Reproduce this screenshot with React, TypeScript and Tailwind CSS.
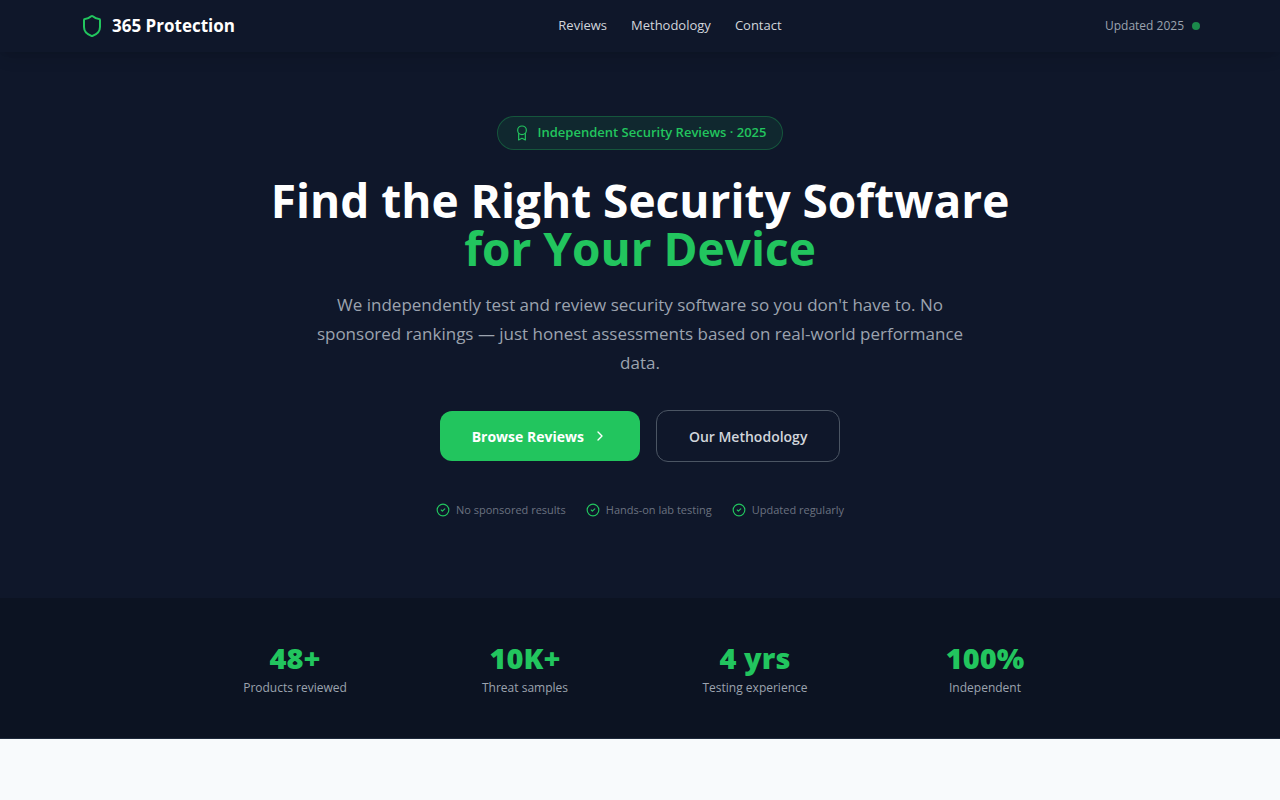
import { Shield, ChevronRight, CircleCheck } from "lucide-react";

const NAV_LINKS = [
  { label: "Reviews", href: "#reviews" },
  { label: "Methodology", href: "#methodology" },
  { label: "Contact", href: "#contact" },
];

const TRUST_POINTS = ["No sponsored results", "Hands-on lab testing", "Updated regularly"];

const STATS = [
  { value: "48+", label: "Products reviewed" },
  { value: "10K+", label: "Threat samples" },
  { value: "4 yrs", label: "Testing experience" },
  { value: "100%", label: "Independent" },
];

function RibbonIcon() {
  return (
    <svg
      viewBox="0 0 24 24"
      className="h-4 w-4"
      fill="none"
      stroke="currentColor"
      strokeWidth={1.75}
      strokeLinecap="round"
      strokeLinejoin="round"
      aria-hidden
    >
      <circle cx="12" cy="8" r="6.5" />
      <path d="M7 13v9.5l5-2.5 5 2.5V13" />
    </svg>
  );
}

function Header() {
  return (
    <header className="relative z-10 bg-[#0f172a] shadow-lg shadow-black/10">
      <div className="mx-auto flex h-[52px] max-w-[1168px] items-center justify-between px-6">
        <a href="#top" className="flex items-center gap-2 text-[17px] font-bold text-white">
          <Shield className="h-6 w-6 text-[#22c55e]" strokeWidth={2} />
          365 Protection
        </a>
        <nav className="flex items-center gap-6">
          {NAV_LINKS.map((link) => (
            <a key={link.label} href={link.href} className="text-[13px] font-medium text-[#d1d5db] hover:text-white">
              {link.label}
            </a>
          ))}
        </nav>
        <div className="flex items-center gap-2 text-[12px] text-[#9ca3af]">
          Updated 2025
          <span className="h-2 w-2 rounded-full bg-[#1b894b]" />
        </div>
      </div>
    </header>
  );
}

function Hero() {
  return (
    <section className="bg-[#0f172a] px-6 pt-16 pb-[78px] text-center">
      <div className="mx-auto flex max-w-4xl flex-col items-center">
        <div className="flex h-[34px] items-center gap-2 rounded-full border border-[#22c55e]/30 bg-[#22c55e]/10 px-4 text-[13px] font-semibold text-[#22c55e]">
          <RibbonIcon />
          Independent Security Reviews · 2025
        </div>
        <h1 className="mt-[26px] text-[46px] leading-[48px] font-bold text-white">
          Find the Right Security Software
          <span className="block text-[#22c55e]">for Your Device</span>
        </h1>
        <p className="mt-[18px] max-w-2xl text-[17px] leading-[29px] text-[#9ca3af]">
          We independently test and review security software so you don't have to. No sponsored rankings — just honest
          assessments based on real-world performance data.
        </p>
        <div className="mt-[33px] flex flex-wrap items-center justify-center gap-4">
          <a
            href="#reviews"
            className="flex h-[50px] items-center gap-2 rounded-xl bg-[#22c55e] px-8 text-[14px] font-bold text-white hover:bg-[#16a34a]"
          >
            Browse Reviews
            <ChevronRight className="h-4 w-4" />
          </a>
          <a
            href="#methodology"
            className="flex h-[52px] items-center rounded-xl border border-[#4b5563] px-8 text-[14px] font-semibold text-[#d1d5db] hover:text-white"
          >
            Our Methodology
          </a>
        </div>
        <ul className="mt-[38px] flex flex-wrap items-center justify-center gap-5 text-[11px] leading-5 text-[#6b7280]">
          {TRUST_POINTS.map((point) => (
            <li key={point} className="flex items-center gap-1.5">
              <CircleCheck className="h-3.5 w-3.5 text-[#22c55e]" />
              {point}
            </li>
          ))}
        </ul>
      </div>
    </section>
  );
}

function Stats() {
  return (
    <section className="border-b border-[#1e293b] bg-[#0c1322] py-10">
      <dl className="mx-auto grid max-w-4xl grid-cols-4 gap-6 text-center">
        {STATS.map((stat) => (
          <div key={stat.label} className="flex flex-col-reverse">
            <dt className="text-[12px] leading-5 text-[#9ca3af]">{stat.label}</dt>
            <dd className="text-[29px] leading-10 font-black text-[#22c55e]">{stat.value}</dd>
          </div>
        ))}
      </dl>
    </section>
  );
}

export default function App() {
  return (
    <div id="top" className="min-h-screen bg-[#f8fafc] font-['Open_Sans','Noto_Sans',sans-serif]">
      <Header />
      <main>
        <Hero />
        <Stats />
      </main>
    </div>
  );
}
